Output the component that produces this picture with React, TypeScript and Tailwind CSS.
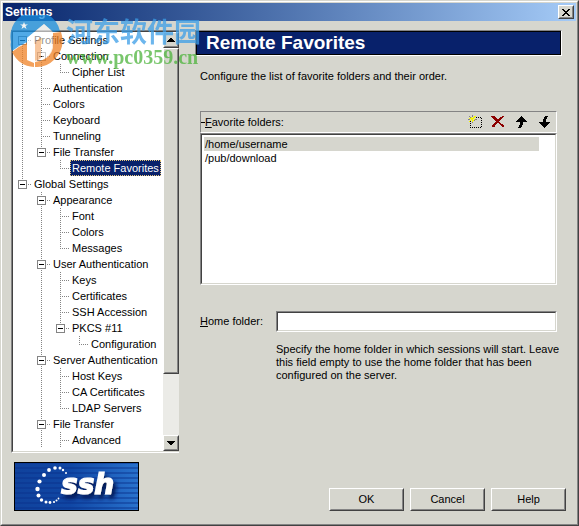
import React, { useState } from 'react';

interface TreeItem {
  label: string;
  children?: TreeItem[];
  more?: boolean;
}

const TREE: TreeItem[] = [
  {
    label: 'Profile Settings',
    children: [
      { label: 'Connection', children: [{ label: 'Cipher List' }] },
      { label: 'Authentication' },
      { label: 'Colors' },
      { label: 'Keyboard' },
      { label: 'Tunneling' },
      { label: 'File Transfer', children: [{ label: 'Remote Favorites' }] },
    ],
  },
  {
    label: 'Global Settings',
    children: [
      { label: 'Appearance', children: [{ label: 'Font' }, { label: 'Colors' }, { label: 'Messages' }] },
      {
        label: 'User Authentication',
        children: [
          { label: 'Keys' },
          { label: 'Certificates' },
          { label: 'SSH Accession' },
          { label: 'PKCS #11', children: [{ label: 'Configuration' }] },
        ],
      },
      {
        label: 'Server Authentication',
        children: [{ label: 'Host Keys' }, { label: 'CA Certificates' }, { label: 'LDAP Servers' }],
      },
      { label: 'File Transfer', more: true, children: [{ label: 'Advanced', more: true }] },
    ],
  },
];

const FOLDERS = ['/home/username', '/pub/download'];

const SUNKEN = 'border border-t-[#848484] border-l-[#848484] border-r-white border-b-white';
const SUNKEN_INNER = 'border border-t-[#424242] border-l-[#424242] border-r-[#d6d6ce] border-b-[#d6d6ce]';
const RAISED = 'border border-t-white border-l-white border-r-[#424242] border-b-[#424242] bg-[#d6d6ce]';
const RAISED_INNER = 'border border-t-[#d6d6ce] border-l-[#d6d6ce] border-r-[#848484] border-b-[#848484]';

const Guide: React.FC<{ on: boolean }> = ({ on }) => (
  <svg width="19" height="16" className="shrink-0" shapeRendering="crispEdges">
    {on && <path d="M9.5 0V16" stroke="#848484" strokeDasharray="1 1" />}
  </svg>
);

const Joint: React.FC<{ top: boolean; bottom: boolean; box: boolean }> = ({ top, bottom, box }) => (
  <svg width="19" height="16" className="shrink-0" shapeRendering="crispEdges">
    {top && <path d="M9.5 0V8" stroke="#848484" strokeDasharray="1 1" />}
    {bottom && <path d="M9.5 8V16" stroke="#848484" strokeDasharray="1 1" />}
    <path d="M9 8.5H19" stroke="#848484" strokeDasharray="1 1" />
    {box && (
      <>
        <rect x="5.5" y="4.5" width="8" height="8" fill="#fff" stroke="#848484" />
        <path d="M7 8.5H12" stroke="#000" />
      </>
    )}
  </svg>
);

interface BranchProps {
  items: TreeItem[];
  guides: boolean[];
  path: string;
  selected: string;
  onSelect: (path: string) => void;
}

const Branch: React.FC<BranchProps> = ({ items, guides, path, selected, onSelect }) => (
  <ul>
    {items.map((item, i) => {
      const last = i === items.length - 1 && !item.more;
      const key = `${path}/${item.label}`;
      return (
        <li key={key}>
          <div className="flex h-4">
            {guides.map((on, g) => <Guide key={g} on={on} />)}
            <Joint top={i > 0 || guides.length > 0} bottom={!last} box={!!item.children} />
            <button
              onClick={() => onSelect(key)}
              className={`h-4 px-px leading-[14px] whitespace-nowrap border ${selected === key ? 'bg-[#08216b] text-white border-dotted border-[#e7c77b]' : 'border-transparent'}`}
            >
              {item.label}
            </button>
          </div>
          {item.children && (
            <Branch items={item.children} guides={[...guides, !last]} path={key} selected={selected} onSelect={onSelect} />
          )}
        </li>
      );
    })}
  </ul>
);

const ScrollButton: React.FC<{ label: string; d: string }> = ({ label, d }) => (
  <button aria-label={label} className={`h-4 w-4 shrink-0 ${RAISED}`}>
    <span className={`flex h-full items-center justify-center ${RAISED_INNER}`}>
      <svg width="8" height="4" shapeRendering="crispEdges"><path d={d} /></svg>
    </span>
  </button>
);

const DialogButton: React.FC<{ children: React.ReactNode }> = ({ children }) => (
  <button className={`h-[23px] w-[75px] ${RAISED}`}>
    <span className={`flex h-full items-center justify-center ${RAISED_INNER}`}>{children}</span>
  </button>
);

const SshLogo: React.FC = () => (
  <svg width="125" height="49" viewBox="0 0 125 49" role="img" aria-label="ssh">
    <defs>
      <linearGradient id="sky" x1="0" y1="0" x2="1" y2="0">
        <stop offset="0" stopColor="#10429c" />
        <stop offset="0.45" stopColor="#1047a5" />
        <stop offset="1" stopColor="#2973ce" />
      </linearGradient>
      <pattern id="lines" width="4" height="5" patternUnits="userSpaceOnUse">
        <rect width="4" height="2" fill="#08318c" opacity="0.45" />
      </pattern>
      <filter id="shade" x="-20%" y="-30%" width="150%" height="190%">
        <feDropShadow dx="3" dy="4" stdDeviation="2" floodColor="#001852" />
      </filter>
    </defs>
    <rect width="125" height="49" fill="url(#sky)" />
    <rect width="125" height="49" fill="url(#lines)" />
    <g fill="#fff">
      <circle cx="52" cy="11" r="1" />
      <circle cx="49" cy="8" r="1.2" />
      <circle cx="46" cy="6" r="1.5" />
      <circle cx="41" cy="6" r="1.8" />
      <circle cx="35" cy="8" r="1.9" />
      <circle cx="30" cy="13" r="2" />
      <circle cx="25.5" cy="19.5" r="2.1" />
      <circle cx="23.5" cy="27" r="2.2" />
      <circle cx="24.5" cy="33.5" r="2" />
      <circle cx="27.5" cy="38" r="1.7" />
      <circle cx="32" cy="40" r="1.5" />
      <circle cx="36" cy="40.5" r="1.4" />
      <circle cx="40" cy="40" r="1.1" />
      <circle cx="42.5" cy="38.5" r="1" />
      <circle cx="44.5" cy="36.5" r="0.9" />
      <text x="47" y="32" fontFamily="'DejaVu Sans', sans-serif" fontSize="28" fontWeight="bold" fontStyle="italic" stroke="#fff" strokeWidth="1.2" filter="url(#shade)">ssh</text>
    </g>
    <rect x="0.5" y="0.5" width="124" height="48" fill="none" stroke="#000" />
  </svg>
);

const Watermark: React.FC = () => (
  <div className="pointer-events-none absolute top-[14px] left-[9px] flex opacity-75">
    <svg width="54" height="54" viewBox="0 0 54 54">
      <path d="M1 27A25 25 0 0 1 50 16L43 17L34 9L17 23V27Q8 31 2 36Q0 32 1 27Z" fill="#188ee0" />
      <path d="M2 37Q9 31 17 28V45L24 48V52Q9 51 2 37Z" fill="#ef8226" />
      <path d="M43 18L51 17Q56 32 45 44Q36 53 25 52V47Q39 45 42 33Z" fill="#ef8226" />
      <path d="M25 27L31 22V43Q28 46 25 46Z" fill="#f5b27c" />
      <path d="M17 23L34 9L43 17V33Q41 42 32 45V21L25 27V47L17 44Z" fill="#fff" fillOpacity="0.75" />
      <path d="M14 7L15 9.5H18L15.5 11L16.5 14L14 12.3L11.5 14L12.5 11L10 9.5H13Z" fill="#fff" />
    </svg>
    <div className="pl-0.5">
      <div className="h-8 text-[27px] leading-8 font-bold whitespace-nowrap text-[#3c9ee8] font-['Noto_Sans_CJK_SC',sans-serif]">河东软件园</div>
      <div className="text-[20px] leading-5 font-bold text-[#4db43c] font-['Liberation_Serif',serif]">www.pc0359.cn</div>
    </div>
  </div>
);

const App: React.FC = () => {
  const [selected, setSelected] = useState('/Profile Settings/File Transfer/Remote Favorites');
  const [folder, setFolder] = useState(0);
  const [home, setHome] = useState('');

  return (
    <div className="relative h-screen bg-[#d6d6ce] border border-t-[#d6d6ce] border-l-[#d6d6ce] border-r-[#424242] border-b-[#424242] text-[11px] leading-[13px] text-black font-['Liberation_Sans',Arial,sans-serif]">
      <div className="flex h-full flex-col border border-t-white border-l-white border-r-[#848484] border-b-[#848484] p-px">
        <header className="flex h-[18px] shrink-0 items-center justify-between bg-linear-to-r from-[#08246b] to-[#a5cbf7] px-0.5">
          <h1 className="text-[12px] font-bold text-white">Settings</h1>
          <button aria-label="Close" className={`h-[14px] w-4 ${RAISED}`}>
            <span className={`flex h-full items-center justify-center ${RAISED_INNER}`}>
              <svg width="8" height="7" shapeRendering="crispEdges">
                <path d="M0 0H2V1H3V2H5V1H6V0H8V1H7V2H6V3H5V4H6V5H7V6H8V7H6V6H5V5H3V6H2V7H0V6H1V5H2V4H3V3H2V2H1V1H0Z" />
              </svg>
            </span>
          </button>
        </header>

        <div className="flex min-h-0 flex-1 gap-4 pt-[9px] pr-[14px] pl-2">
          <nav className="w-[168px] shrink-0 border border-r-0 border-t-[#848484] border-l-[#848484] border-b-white">
            <div className="flex h-full border border-r-0 border-t-[#424242] border-l-[#424242] border-b-[#d6d6ce] bg-white">
              <div className="flex-1 overflow-hidden">
                <Branch items={TREE} guides={[]} path="" selected={selected} onSelect={setSelected} />
              </div>
              <div className="flex w-4 flex-col bg-[#ebebe7]">
                <ScrollButton label="Scroll up" d="M3 0H5V1H6V2H7V3H8V4H0V3H1V2H2V1H3Z" />
                <div className={`flex-[326] ${RAISED}`}>
                  <div className={`h-full ${RAISED_INNER}`} />
                </div>
                <div className="flex-[61]" />
                <ScrollButton label="Scroll down" d="M0 0H8V1H7V2H6V3H5V4H3V3H2V2H1V1H0Z" />
              </div>
            </div>
          </nav>

          <main className="min-w-0 flex-1">
            <div className="border border-t-[#848484] border-l-[#848484] border-r-white border-b-white">
              <h2 className="h-6 border border-black bg-[#08216b] pl-[9px] text-[19px] leading-[22px] font-bold text-white">Remote Favorites</h2>
            </div>
            <div className="pr-[5px] pl-[5px]">
              <p className="pt-[14px]">Configure the list of favorite folders and their order.</p>

              <div className="mt-7 flex h-[22px] items-center justify-between border border-t-[#848484] border-l-[#848484] border-r-white border-b-white pr-[5px]">
                <div className="flex items-center">
                  <span className="h-px w-1 bg-black" />
                  <span id="folders-label"><u>F</u>avorite folders:</span>
                </div>
                <div className="flex items-center gap-[9px]">
                  <button aria-label="New folder">
                    <svg width="14" height="14" shapeRendering="crispEdges">
                      <path d="M2.5 6V13M13.5 3V13M8 2.5H14M2 12.5H14" stroke="#000" strokeDasharray="1 1" fill="none" />
                      <path d="M4 0H5V2H4ZM1 1H2V2H1ZM2 2H3V3H2ZM0 4H2V5H0ZM7 4H9V5H7ZM6 5H7V6H6ZM4 6H5V8H4ZM1 6H2V7H1Z" fill="#848484" />
                      <path d="M3 2H4V3H5V2H6V1H8V2H7V3H6V4H7V5H6V4H5V5H6V6H5V7H4V5H3V6H2V7H1V6H2V5H3V4H1V3H3Z" fill="#f7f700" />
                    </svg>
                  </button>
                  <button aria-label="Delete">
                    <svg width="14" height="12" shapeRendering="crispEdges">
                      <path d="M0 0H4V1H5V2H6V3H8V2H9V1H11V0H13V1H12V2H11V3H10V4H9V5H8V6H9V7H10V8H12V9H13V11H11V10H10V9H9V8H8V7H6V8H5V9H4V11H1V9H2V8H3V7H4V6H5V5H4V4H3V3H2V2H1V1H0Z" fill="#8c0000" />
                    </svg>
                  </button>
                  <button aria-label="Move up">
                    <svg width="14" height="13" shapeRendering="crispEdges">
                      <path d="M7 0H8V1H9V2H10V3H11V4H12V5H13V6H9V9H8V11H7V12H4V11H5V9H6V6H2V5H3V4H4V3H5V2H6V1H7Z" />
                    </svg>
                  </button>
                  <button aria-label="Move down">
                    <svg width="14" height="13" shapeRendering="crispEdges">
                      <path d="M8 0H11V1H10V3H9V6H13V7H12V8H11V9H10V10H9V11H8V12H7V11H6V10H5V9H4V8H3V7H2V6H6V3H7V1H8Z" />
                    </svg>
                  </button>
                </div>
              </div>

              <div className={SUNKEN}>
                <div role="listbox" aria-labelledby="folders-label" className={`flex h-[150px] flex-col bg-white py-0.5 pr-4 pl-0.5 ${SUNKEN_INNER}`}>
                  {FOLDERS.map((name, i) => (
                    <button
                      key={name}
                      role="option"
                      aria-selected={folder === i}
                      onClick={() => setFolder(i)}
                      className={`h-[14px] px-px text-left leading-[14px] ${folder === i ? 'bg-[#d6d6ce]' : ''}`}
                    >
                      {name}
                    </button>
                  ))}
                </div>
              </div>

              <div className="mt-[26px] grid grid-cols-[76px_1fr] items-center">
                <label htmlFor="home"><u>H</u>ome folder:</label>
                <div className={SUNKEN}>
                  <input
                    id="home"
                    value={home}
                    onChange={(e) => setHome(e.target.value)}
                    className={`block h-[19px] w-full bg-white px-1 outline-none ${SUNKEN_INNER}`}
                  />
                </div>
                <p className="col-start-2 -mr-3 pt-[11px]">
                  Specify the home folder in which sessions will start. Leave this field empty to use the home folder that has been configured on the server.
                </p>
              </div>
            </div>
          </main>
        </div>

        <footer className="flex shrink-0 items-end justify-between pt-[9px] pr-[10px] pb-3 pl-[11px]">
          <SshLogo />
          <div className="flex gap-[6px]">
            <DialogButton>OK</DialogButton>
            <DialogButton>Cancel</DialogButton>
            <DialogButton>Help</DialogButton>
          </div>
        </footer>
      </div>
      <Watermark />
    </div>
  );
};

export default App;
